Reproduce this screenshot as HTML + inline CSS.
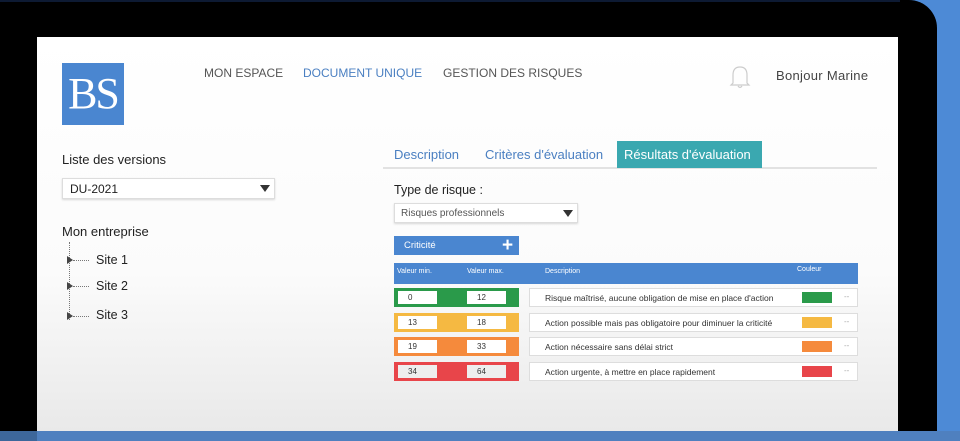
<!DOCTYPE html>
<html><head><meta charset="utf-8"><style>
*{margin:0;padding:0;box-sizing:border-box}
body{width:960px;height:441px;overflow:hidden;background:#4d8ad6;position:relative;font-family:"Liberation Sans",sans-serif}
.a{position:absolute;white-space:nowrap}
#bezel{left:0;top:0;width:937px;height:441px;background:#000;border-top-right-radius:28px}
#top{left:0;top:0;width:900px;height:2px;background:#0d1a33}
#screen{left:37px;top:37px;width:861px;height:394px;background:linear-gradient(#fff 0%,#fbfbfb 60%,#e9e9e9 100%)}
#bot{left:0;top:431px;width:960px;height:10px;background:#4f80bf}
#botl{left:0;top:431px;width:37px;height:10px;background:#3d679b}
.nav{font-size:12px;color:#555;top:66px}
.sel{background:#fff;border:1px solid #ddd;box-shadow:0 1px 2px rgba(0,0,0,.15)}
.tri{width:0;height:0;border-left:5px solid transparent;border-right:5px solid transparent;border-top:7px solid #333}
.row{left:394px;width:125px;height:19px}
.in{top:3px;width:39px;height:13px;background:#fff;font-size:8px;color:#333;padding:2px 0 0 10px}
.desc{left:529px;width:329px;height:19px;background:#fff;border:1px solid #ddd;font-size:8.5px;color:#333;padding:4px 0 0 15px}
.sw{width:30px;height:11px}
.dots{font-size:8px;color:#aaa}
.hd{font-size:7px;color:#fff;top:268px}
.t{font-size:13px;top:147px;color:#4a7fc1}
</style></head><body>
<div class="a" id="bezel"></div>
<div class="a" id="top"></div>
<div class="a" id="screen"></div>
<div class="a" id="bot"></div>
<div class="a" id="botl"></div>

<div class="a" style="left:62px;top:63px;width:62px;height:62px;background:#4a86d0;color:#fff;font-family:'Liberation Serif',serif;font-size:44px;line-height:62px;text-align:center;letter-spacing:-2px">BS</div>
<div class="a nav" style="left:204px">MON ESPACE</div>
<div class="a nav" style="left:303px;color:#4a7fc1">DOCUMENT UNIQUE</div>
<div class="a nav" style="left:443px">GESTION DES RISQUES</div>
<svg class="a" style="left:729px;top:64px" width="22" height="26" viewBox="0 0 22 26"><path d="M4 19 L4 11 Q4 3 11 3 Q18 3 18 11 L18 19 L20 21 L2 21 Z M9 22 Q11 25 13 22" fill="none" stroke="#ccc" stroke-width="1.2"/></svg>
<div class="a" style="left:776px;top:68px;font-size:13px;color:#444;letter-spacing:0.3px">Bonjour Marine</div>

<div class="a" style="left:62px;top:152px;font-size:13px;color:#222">Liste des versions</div>
<div class="a sel" style="left:62px;top:178px;width:213px;height:21px;font-size:12px;color:#222;padding:3px 0 0 7px">DU-2021</div>
<div class="a tri" style="left:260px;top:185px"></div>
<div class="a" style="left:62px;top:224px;font-size:13px;color:#222">Mon entreprise</div>
<div class="a" style="left:69px;top:242px;height:78px;border-left:1px dotted #777"></div>
<div class="a" style="left:67px;top:256px;border-top:4px solid transparent;border-bottom:4px solid transparent;border-left:6px solid #444"></div>
<div class="a" style="left:73px;top:260px;width:16px;border-top:1px dotted #777"></div>
<div class="a" style="left:96px;top:253px;font-size:12.5px;color:#222">Site 1</div>
<div class="a" style="left:67px;top:282px;border-top:4px solid transparent;border-bottom:4px solid transparent;border-left:6px solid #444"></div>
<div class="a" style="left:73px;top:286px;width:16px;border-top:1px dotted #777"></div>
<div class="a" style="left:96px;top:279px;font-size:12.5px;color:#222">Site 2</div>
<div class="a" style="left:67px;top:312px;border-top:4px solid transparent;border-bottom:4px solid transparent;border-left:6px solid #444"></div>
<div class="a" style="left:73px;top:316px;width:16px;border-top:1px dotted #777"></div>
<div class="a" style="left:96px;top:308px;font-size:12.5px;color:#222">Site 3</div>

<div class="a" style="left:383px;top:167px;width:494px;height:2px;background:#e2e2e2"></div>
<div class="a t" style="left:394px">Description</div>
<div class="a t" style="left:485px">Critères d'évaluation</div>
<div class="a" style="left:617px;top:141px;width:145px;height:27px;background:#3aa8b0;color:#fff;font-size:13px;padding:6px 0 0 7px">Résultats d'évaluation</div>
<div class="a" style="left:394px;top:183px;font-size:12.5px;color:#222">Type de risque :</div>
<div class="a sel" style="left:394px;top:203px;width:184px;height:20px;font-size:10px;color:#555;padding:4px 0 0 6px">Risques professionnels</div>
<div class="a tri" style="left:563px;top:210px"></div>
<div class="a" style="left:394px;top:236px;width:125px;height:19px;background:#4a86d0;color:#fff;font-size:9.5px;padding:4px 0 0 10px">Criticité</div>
<div class="a" style="left:502px;top:236px;color:#fff;font-size:19px;line-height:19px;font-weight:bold">+</div>
<div class="a" style="left:394px;top:263px;width:464px;height:21px;background:#4a86d0"></div>
<div class="a hd" style="left:397px">Valeur min.</div>
<div class="a hd" style="left:467px">Valeur max.</div>
<div class="a hd" style="left:545px">Description</div>
<div class="a hd" style="left:797px;top:266px">Couleur</div>

<div class="a row" style="top:288px;background:#2a9a4a"><div class="a in" style="left:4px">0</div><div class="a in" style="left:73px">12</div></div>
<div class="a desc" style="top:288px">Risque maîtrisé, aucune obligation de mise en place d'action</div>
<div class="a sw" style="left:802px;top:292px;background:#2a9a4a"></div><div class="a dots" style="left:844px;top:292px">--</div>

<div class="a row" style="top:313px;background:#f5b942"><div class="a in" style="left:4px">13</div><div class="a in" style="left:73px">18</div></div>
<div class="a desc" style="top:313px">Action possible mais pas obligatoire pour diminuer la criticité</div>
<div class="a sw" style="left:802px;top:317px;background:#f5b942"></div><div class="a dots" style="left:844px;top:317px">--</div>

<div class="a row" style="top:337px;background:#f58a3c"><div class="a in" style="left:4px">19</div><div class="a in" style="left:73px">33</div></div>
<div class="a desc" style="top:337px">Action nécessaire sans délai strict</div>
<div class="a sw" style="left:802px;top:341px;background:#f58a3c"></div><div class="a dots" style="left:844px;top:341px">--</div>

<div class="a row" style="top:362px;background:#e8454a"><div class="a in" style="left:4px;background:#eee">34</div><div class="a in" style="left:73px;background:#eee">64</div></div>
<div class="a desc" style="top:362px">Action urgente, à mettre en place rapidement</div>
<div class="a sw" style="left:802px;top:366px;background:#e8454a"></div><div class="a dots" style="left:844px;top:366px">--</div>
</body></html>
